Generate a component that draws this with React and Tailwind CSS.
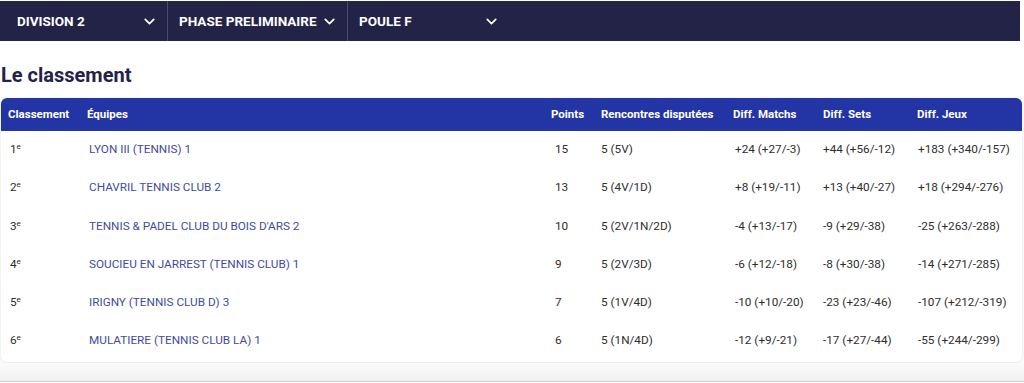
import React from 'react'
import { ChevronDown } from 'lucide-react'

const rows = [
    { rank: 1, team: 'LYON III (TENNIS) 1', points: 15, played: '5 (5V)', matchs: '+24 (+27/-3)', sets: '+44 (+56/-12)', jeux: '+183 (+340/-157)' },
    { rank: 2, team: 'CHAVRIL TENNIS CLUB 2', points: 13, played: '5 (4V/1D)', matchs: '+8 (+19/-11)', sets: '+13 (+40/-27)', jeux: '+18 (+294/-276)' },
    { rank: 3, team: "TENNIS & PADEL CLUB DU BOIS D'ARS 2", points: 10, played: '5 (2V/1N/2D)', matchs: '-4 (+13/-17)', sets: '-9 (+29/-38)', jeux: '-25 (+263/-288)' },
    { rank: 4, team: 'SOUCIEU EN JARREST (TENNIS CLUB) 1', points: 9, played: '5 (2V/3D)', matchs: '-6 (+12/-18)', sets: '-8 (+30/-38)', jeux: '-14 (+271/-285)' },
    { rank: 5, team: 'IRIGNY (TENNIS CLUB D) 3', points: 7, played: '5 (1V/4D)', matchs: '-10 (+10/-20)', sets: '-23 (+23/-46)', jeux: '-107 (+212/-319)' },
    { rank: 6, team: 'MULATIERE (TENNIS CLUB LA) 1', points: 6, played: '5 (1N/4D)', matchs: '-12 (+9/-21)', sets: '-17 (+27/-44)', jeux: '-55 (+244/-299)' },
]

const cols = 'grid grid-cols-[79px_464px_50px_132px_90px_94px_1fr]'

const Select = ({ label, className }) => (
    <button className={`flex items-center justify-between h-full text-white font-bold text-[13.5px] ${className}`}>
        <span>{label}</span>
        <ChevronDown size={17} strokeWidth={2.4} />
    </button>
)

const App = () => {
    return (
        <div className="w-[1024px] h-[383px] bg-white flex flex-col font-['Roboto',sans-serif] overflow-hidden">
            {/* Filters */}
            <div className="mt-px h-10 w-[1020px] bg-[#222347] flex">
                <Select label="DIVISION 2" className="w-[168px] pl-[17px] pr-[9px] border-r border-[#4a4c6c]" />
                <Select label="PHASE PRELIMINAIRE" className="w-[180px] pl-[11px] pr-[9px] border-r border-[#4a4c6c]" />
                <Select label="POULE F" className="w-[156px] pl-[11px] pr-[4px]" />
            </div>

            <h2 className="mt-[22px] ml-px text-[20px] leading-6 font-bold text-[#222347]">Le classement</h2>

            {/* Table */}
            <div className="mt-[11px] ml-px w-[1021px] rounded-md bg-white pb-[2px] shadow-[0_1px_4px_rgba(0,0,0,0.12)]">
                <div className={`${cols} h-[33px] items-center bg-[#2334a5] rounded-t-md text-white font-bold text-[11.5px]`}>
                    <div className="pl-[7px]">Classement</div>
                    <div className="pl-[7px]">Équipes</div>
                    <div className="pl-[7px]">Points</div>
                    <div className="pl-[7px]">Rencontres disputées</div>
                    <div className="pl-[7px]">Diff. Matchs</div>
                    <div className="pl-[7px]">Diff. Sets</div>
                    <div className="pl-[7px]">Diff. Jeux</div>
                </div>
                {rows.map(r => (
                    <div key={r.rank} className={`${cols} h-[38.2px] items-center text-[11.75px] text-[#2e2e2e]`}>
                        <div className="pl-[9px]">
                            {r.rank}<sup className="text-[8px]">e</sup>
                        </div>
                        <div className="pl-[9px] text-[#3f4c9c]">{r.team}</div>
                        <div className="pl-[11px]">{r.points}</div>
                        <div className="pl-[7px]">{r.played}</div>
                        <div className="pl-[9px]">{r.matchs}</div>
                        <div className="pl-[7px]">{r.sets}</div>
                        <div className="pl-[8px]">{r.jeux}</div>
                    </div>
                ))}
            </div>

            <div className="mt-px flex-1 bg-gradient-to-b from-[#fafafa] to-[#f1f1f1] border-b border-[#cfcfcf] mb-px" />
        </div>
    )
}

export default App
